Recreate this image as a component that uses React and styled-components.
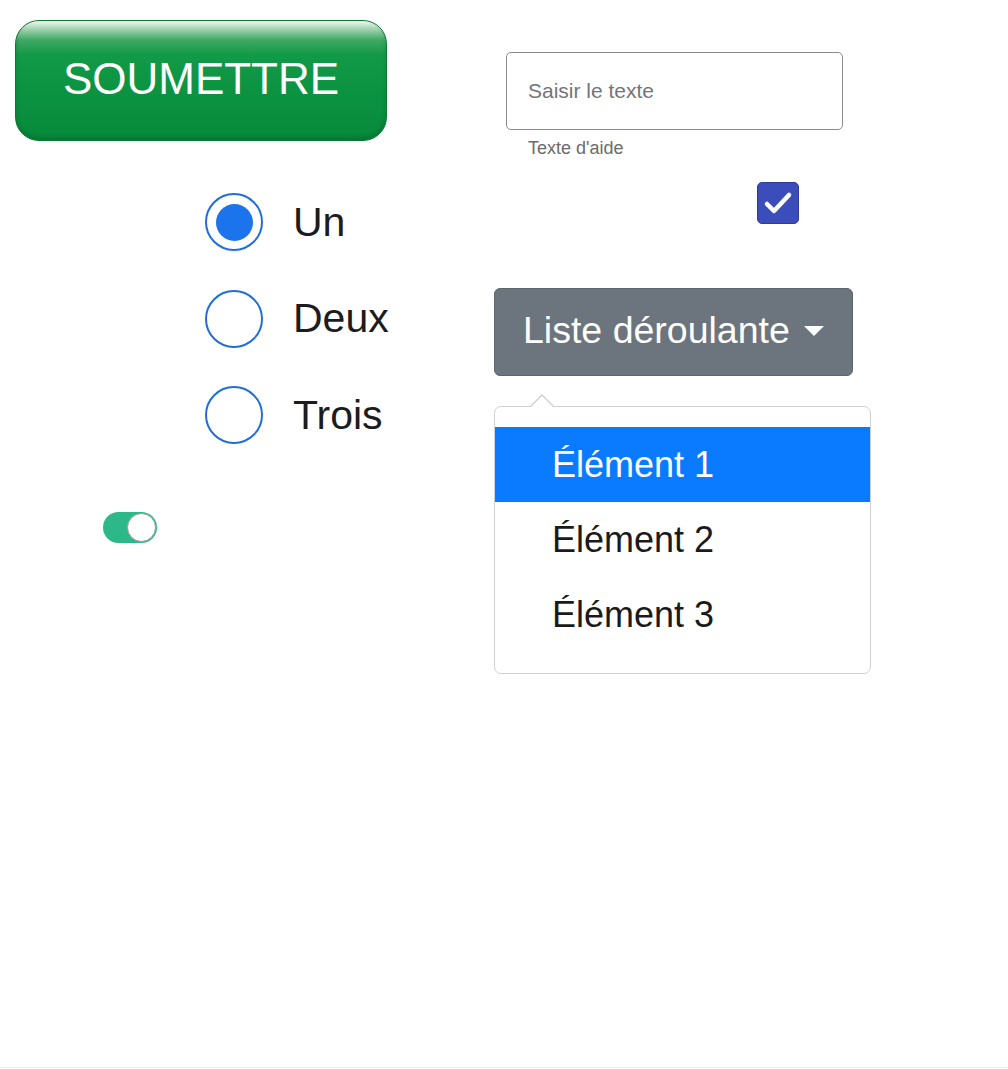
import styled, { createGlobalStyle } from "styled-components";

const GlobalStyle = createGlobalStyle`
  html, body {
    margin: 0;
    padding: 0;
    background: #ffffff;
  }
  body {
    font-family: "Liberation Sans", Arial, sans-serif;
    color: #1a1a1a;
  }
`;

const Page = styled.div`
  display: grid;
  grid-template-columns: 494px 1fr;
  min-height: 1068px;
  border-bottom: 1px solid #eeeeee;
  box-sizing: border-box;
`;

const LeftColumn = styled.div`
  display: flex;
  flex-direction: column;
  align-items: flex-start;
  padding-top: 20px;
`;

const RightColumn = styled.div`
  display: flex;
  flex-direction: column;
  align-items: flex-start;
  padding-top: 52px;
`;

const SubmitButton = styled.button`
  margin-left: 15px;
  width: 372px;
  height: 121px;
  border: 1px solid #0a7a34;
  border-radius: 24px;
  background: linear-gradient(
    180deg,
    #f2f8f3 0%,
    #9fd2ae 7%,
    #3fa864 16%,
    #139a48 28%,
    #0b9342 60%,
    #078a3b 100%
  );
  box-shadow: inset 0 -3px 4px rgba(0, 60, 20, 0.25);
  color: #ffffff;
  font-family: "Liberation Sans", Arial, sans-serif;
  font-size: 44px;
  padding: 0 0 4px 0;
  cursor: pointer;
`;

const RadioGroup = styled.div`
  display: flex;
  flex-direction: column;
  gap: 38.5px;
  margin-top: 52px;
  margin-left: 205px;
`;

const RadioRow = styled.label`
  display: flex;
  align-items: center;
  gap: 30px;
  height: 58px;
  font-size: 41px;
  color: #1c1c1c;
`;

const RadioCircle = styled.span`
  width: 58px;
  height: 58px;
  box-sizing: border-box;
  border: 2.5px solid #1f6fd6;
  border-radius: 50%;
  display: flex;
  align-items: center;
  justify-content: center;
  &::after {
    content: "";
    width: 37px;
    height: 37px;
    border-radius: 50%;
    background: #1b74ec;
    display: ${(p) => (p.$checked ? "block" : "none")};
  }
`;

const Toggle = styled.span`
  margin-top: 68px;
  margin-left: 103px;
  width: 54px;
  height: 31px;
  border-radius: 16px;
  background: #2db88a;
  display: flex;
  justify-content: flex-end;
  align-items: center;
  box-sizing: border-box;
  padding-right: 1px;
`;

const ToggleKnob = styled.span`
  width: 29px;
  height: 29px;
  border-radius: 50%;
  background: #ffffff;
  box-sizing: border-box;
  border: 1px solid #9a9a9a;
`;

const TextField = styled.div`
  margin-left: 12px;
  width: 337px;
  height: 78px;
  box-sizing: border-box;
  border: 1.5px solid #8a8a8a;
  border-radius: 5px;
  display: flex;
  align-items: center;
  padding-left: 21px;
  font-size: 21px;
  color: #757575;
`;

const HelperText = styled.div`
  margin-left: 34px;
  margin-top: 8px;
  font-size: 18px;
  color: #6b6b6b;
  line-height: 20px;
`;

const CheckBox = styled.span`
  margin-left: 263px;
  margin-top: 24px;
  width: 42px;
  height: 42px;
  box-sizing: border-box;
  border-radius: 5px;
  background: #3a4dba;
  border: 1.5px solid #2c3c9c;
  display: flex;
  align-items: center;
  justify-content: center;
`;

const DropdownButton = styled.button`
  margin-top: 64px;
  width: 359px;
  height: 88px;
  border: 1px solid #5e666d;
  border-radius: 6px;
  background: #6c757d;
  color: #ffffff;
  font-family: "Liberation Sans", Arial, sans-serif;
  font-size: 37.5px;
  display: flex;
  align-items: center;
  padding: 0 0 4px 28px;
  gap: 14px;
  box-sizing: border-box;
`;

const Caret = styled.span`
  width: 0;
  height: 0;
  border-left: 10px solid transparent;
  border-right: 10px solid transparent;
  border-top: 10px solid #ffffff;
  margin-top: 2px;
`;

const Menu = styled.div`
  position: relative;
  margin-top: 30px;
  width: 377px;
  height: 268px;
  box-sizing: border-box;
  border: 1.5px solid #d0d0d0;
  border-radius: 7px;
  background: #ffffff;
  padding-top: 20px;

  &::before,
  &::after {
    content: "";
    position: absolute;
    left: 34px;
    width: 0;
    height: 0;
    border-left: 13px solid transparent;
    border-right: 13px solid transparent;
  }
  &::before {
    top: -13px;
    border-bottom: 13px solid #d0d0d0;
  }
  &::after {
    top: -11px;
    border-bottom: 13px solid #ffffff;
  }
`;

const MenuItem = styled.div`
  height: 75px;
  display: flex;
  align-items: center;
  padding-left: 57px;
  box-sizing: border-box;
  font-size: 36px;
  background: ${(p) => (p.$active ? "#0a7bff" : "transparent")};
  color: ${(p) => (p.$active ? "#ffffff" : "#1a1a1a")};
`;

const options = ["Un", "Deux", "Trois"];
const items = ["Élément 1", "Élément 2", "Élément 3"];

export default function App() {
  return (
    <>
      <GlobalStyle />
      <Page>
        <LeftColumn>
          <SubmitButton>SOUMETTRE</SubmitButton>
          <RadioGroup>
            {options.map((o, i) => (
              <RadioRow key={o}>
                <RadioCircle $checked={i === 0} />
                {o}
              </RadioRow>
            ))}
          </RadioGroup>
          <Toggle>
            <ToggleKnob />
          </Toggle>
        </LeftColumn>
        <RightColumn>
          <TextField>Saisir le texte</TextField>
          <HelperText>Texte d'aide</HelperText>
          <CheckBox>
            <svg width="40" height="40" viewBox="0 0 40 40">
              <polyline
                points="9,21 16,28 31,12"
                fill="none"
                stroke="#ffffff"
                strokeWidth="4.5"
                strokeLinecap="round"
                strokeLinejoin="round"
              />
            </svg>
          </CheckBox>
          <DropdownButton>
            Liste déroulante
            <Caret />
          </DropdownButton>
          <Menu>
            {items.map((it, i) => (
              <MenuItem key={it} $active={i === 0}>
                {it}
              </MenuItem>
            ))}
          </Menu>
        </RightColumn>
      </Page>
    </>
  );
}
